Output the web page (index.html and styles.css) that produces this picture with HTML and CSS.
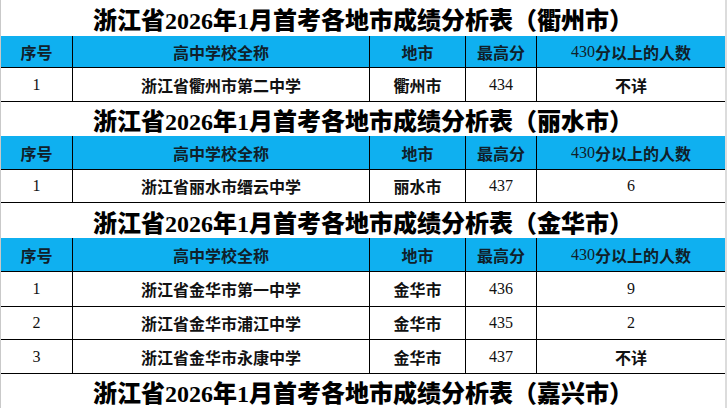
FILE: index.html
```html
<!DOCTYPE html>
<html lang="zh">
<head>
<meta charset="utf-8">
<title>浙江省2026年1月首考各地市成绩分析表</title>
<link rel="stylesheet" href="styles.css">
</head>
<body>
<div class="sheet">
  <div class="title title-first">浙江省2026年1月首考各地市成绩分析表（衢州市）</div>
  <div class="tbl">
    <div class="c h h-first">序号</div>
    <div class="c h h-first">高中学校全称</div>
    <div class="c h h-first">地市</div>
    <div class="c h h-first">最高分</div>
    <div class="c h h-first last"><span class="num">430</span>分以上的人数</div>
    <div class="c num">1</div>
    <div class="c">浙江省衢州市第二中学</div>
    <div class="c">衢州市</div>
    <div class="c num">434</div>
    <div class="c last">不详</div>
  </div>

  <div class="title">浙江省2026年1月首考各地市成绩分析表（丽水市）</div>
  <div class="tbl">
    <div class="c h">序号</div>
    <div class="c h">高中学校全称</div>
    <div class="c h">地市</div>
    <div class="c h">最高分</div>
    <div class="c h last"><span class="num">430</span>分以上的人数</div>
    <div class="c num r33">1</div>
    <div class="c r33">浙江省丽水市缙云中学</div>
    <div class="c r33">丽水市</div>
    <div class="c num r33">437</div>
    <div class="c num r33 last">6</div>
  </div>

  <div class="title t35">浙江省2026年1月首考各地市成绩分析表（金华市）</div>
  <div class="tbl">
    <div class="c h">序号</div>
    <div class="c h">高中学校全称</div>
    <div class="c h">地市</div>
    <div class="c h">最高分</div>
    <div class="c h last"><span class="num">430</span>分以上的人数</div>
    <div class="c num r35">1</div>
    <div class="c r35">浙江省金华市第一中学</div>
    <div class="c r35">金华市</div>
    <div class="c num r35">436</div>
    <div class="c num r35 last">9</div>
    <div class="c num r33">2</div>
    <div class="c r33">浙江省金华市浦江中学</div>
    <div class="c r33">金华市</div>
    <div class="c num r33">435</div>
    <div class="c num r33 last">2</div>
    <div class="c num">3</div>
    <div class="c">浙江省金华市永康中学</div>
    <div class="c">金华市</div>
    <div class="c num">437</div>
    <div class="c last">不详</div>
  </div>

  <div class="title">浙江省2026年1月首考各地市成绩分析表（嘉兴市）</div>
</div>
</body>
</html>
```

FILE: styles.css
```css
html, body {
  margin: 0;
  padding: 0;
  background: #ffffff;
}

body {
  font-family: "Liberation Serif", "Noto Sans CJK SC", serif;
  color: #111111;
}

.sheet {
  width: 727px;
  height: 408px;
  box-sizing: border-box;
  border-left: 1px solid #c9c9c9;
  border-right: 2px solid #dcdcdc;
  overflow: hidden;
}

.title {
  height: 34px;
  display: flex;
  align-items: center;
  justify-content: center;
  font-size: 24px;
  font-weight: 900;
  color: #000000;
  padding-top: 1px;
  box-sizing: border-box;
}

.title-first {
  height: 36px;
  padding-top: 0;
}

.t35 {
  height: 35px;
}

.tbl {
  display: grid;
  grid-template-columns: 72px 297px 96px 71px 188px;
}

.c {
  box-sizing: border-box;
  height: 34px;
  border-right: 1px solid #000000;
  border-bottom: 1px solid #000000;
  display: flex;
  align-items: center;
  justify-content: center;
  font-size: 16px;
  font-weight: 700;
  white-space: nowrap;
}

.c.last {
  border-right: none;
}

.h {
  background: #0fb0f0;
  color: #10202a;
}

.h-first {
  height: 32px;
}

.r33 {
  height: 33px;
}

.r35 {
  height: 35px;
}

.num {
  font-weight: 400;
  font-size: 16px;
}
```
